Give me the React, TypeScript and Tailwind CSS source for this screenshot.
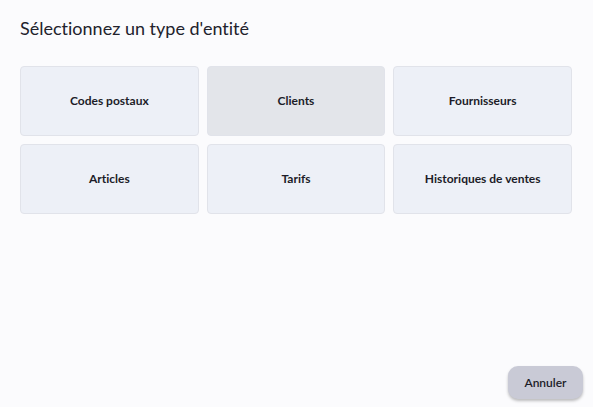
const types = [
    "Codes postaux",
    "Clients",
    "Fournisseurs",
    "Articles",
    "Tarifs",
    "Historiques de ventes",
];

export default function App() {
    return (
        <div className="w-[593px] h-[407px] bg-[#fbfbfd] font-['Lato',sans-serif] [font-variant-ligatures:none] text-[#1c1c28] flex flex-col">
            <h1 className="ml-5 mt-[15px] text-[18px] leading-[26px] text-[#22222c]">
                Sélectionnez un type d'entité
            </h1>
            <div className="mt-[25px] ml-5 w-[552px] grid grid-cols-3 gap-2">
                {types.map((t, i) => (
                    <button
                        key={t}
                        className={
                            "h-[70px] rounded-[4px] border border-[#e1e3ea] text-[12px] font-bold flex items-center justify-center " +
                            (i === 1 ? "bg-[#e3e5ea]" : "bg-[#edf0f7]")
                        }
                    >
                        {t}
                    </button>
                ))}
            </div>
            <div className="mt-auto mb-[8px] mr-[10px] flex justify-end">
                <button className="w-[75px] h-[33px] rounded-[10px] bg-[#c9cad6] text-[12px] font-semibold shadow-[0_2px_3px_rgba(0,0,0,0.25)]">
                    Annuler
                </button>
            </div>
        </div>
    );
}
